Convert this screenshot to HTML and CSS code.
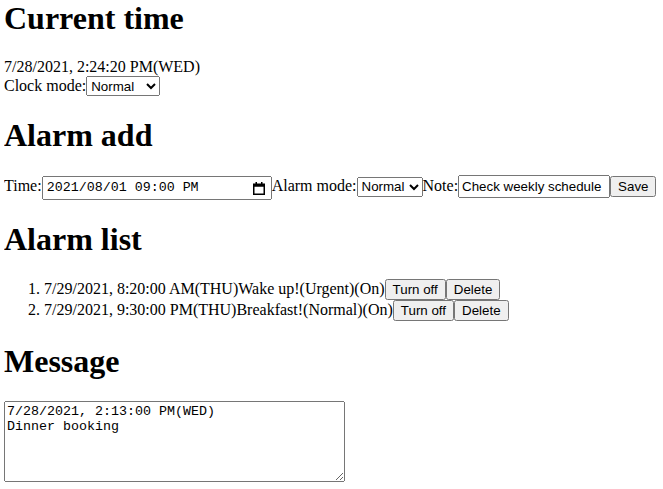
FILE: index.html
```html
<!DOCTYPE html>
<html lang="en">
<head>
<meta charset="utf-8">
<title>Alarm clock</title>
<link rel="stylesheet" href="styles.css">
</head>
<body>
<h1 class="first">Current time</h1>
<div>7/28/2021, 2:24:20 PM(WED)</div>
<div>Clock mode:<select class="sel sel-clock"><option>Normal</option><option>Silent</option></select></div>

<h1>Alarm add</h1>
<div class="row">Time:<span class="dt"><input class="dt-input" type="text" value="2021/08/01 09:00 PM"><svg class="cal" width="12" height="13" viewBox="0 0 12 13"><rect x="0.75" y="2.25" width="10.5" height="10" fill="none" stroke="#000" stroke-width="1.5"/><rect x="0.75" y="2.25" width="10.5" height="2.5" fill="#000"/><rect x="2.5" y="0" width="1.5" height="3" fill="#000"/><rect x="8" y="0" width="1.5" height="3" fill="#000"/></svg></span>Alarm mode:<select class="sel sel-alarm"><option>Normal</option><option>Urgent</option></select>Note:<input class="note" type="text" value="Check weekly schedule"><button class="btn">Save</button></div>

<h1>Alarm list</h1>
<ol class="list">
<li>7/29/2021, 8:20:00 AM(THU)Wake up!(Urgent)(On)<button class="btn">Turn off</button><button class="btn">Delete</button></li>
<li>7/29/2021, 9:30:00 PM(THU)Breakfast!(Normal)(On)<button class="btn">Turn off</button><button class="btn">Delete</button></li>
</ol>

<h1 class="msg-title">Message</h1>
<textarea class="msg">7/28/2021, 2:13:00 PM(WED)
Dinner booking</textarea>
</body>
</html>
```
FILE: styles.css
```css
body {
  margin: 0 4px;
  font-family: "Liberation Serif", "Times New Roman", serif;
  font-size: 16px;
  color: #000;
  background: #fff;
}
h1 {
  font-size: 32px;
  font-weight: bold;
  margin: 21px 0;
}
h1.first {
  margin-top: 0;
}
h1.msg-title {
  margin-top: 22px;
}
select, input, button, textarea {
  font-family: "Liberation Sans", Arial, sans-serif;
  font-size: 13.33px;
}
.sel {
  height: 20px;
  box-sizing: border-box;
}
.sel-clock { width: 74px; }
.sel-alarm { width: 66px; }
.dt {
  position: relative;
  display: inline-block;
}
.dt-input {
  width: 230px;
  height: 24px;
  box-sizing: border-box;
  font-family: "Liberation Mono", "Courier New", monospace;
  padding: 1px 3px;
}
.cal {
  position: absolute;
  right: 7px;
  top: 6px;
}
.note {
  width: 152px;
  height: 23px;
  box-sizing: border-box;
}
.btn {
  height: 21px;
  padding: 1px 6px;
  box-sizing: border-box;
}
.list {
  margin: 16px 0;
  padding-left: 40px;
}
.list li {
  height: 21px;
}
.msg {
  width: 341px;
  height: 81px;
  box-sizing: border-box;
  font-family: "Liberation Mono", "Courier New", monospace;
  font-size: 13.33px;
  margin: 0;
}
```
